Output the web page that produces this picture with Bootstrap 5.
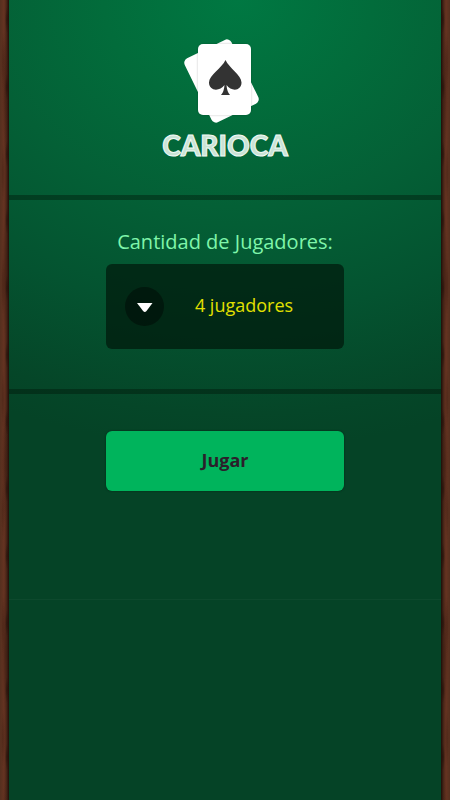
<!DOCTYPE html>
<html lang="es">
<head>
<meta charset="utf-8">
<meta name="viewport" content="width=device-width, initial-scale=1">
<title>Carioca</title>
<link href="https://cdn.jsdelivr.net/npm/bootstrap@5.3.0/dist/css/bootstrap.min.css" rel="stylesheet">
<style>
body { font-family: "Open Sans", sans-serif; background: #054326; }
/* Wooden rails on both sides of the felt */
.rail {
  width: 9px;
  background:
    radial-gradient(ellipse at 7px 20px, rgba(25, 10, 5, .5) 0, transparent 2px) 0 0 / 9px 67px,
    radial-gradient(ellipse 2px 30px at 3px 60px, rgba(35, 15, 8, .25) 0, transparent 100%) 0 0 / 9px 113px,
    radial-gradient(ellipse 3px 60px at 5px 90px, rgba(35, 15, 8, .3) 0, transparent 100%) 0 0 / 9px 187px,
    linear-gradient(90deg, #55301f 0, #653321 45%, #4b2719 70%, #1d0e08 100%);
}
.rail-right { transform: scaleX(-1); }
.felt {
  background:
    linear-gradient(rgba(255, 255, 255, .03), rgba(255, 255, 255, .03)) 0 599px / 100% 1px no-repeat,
    radial-gradient(ellipse 560px 450px at 53% 0, #007842 0, #026c3b 24%, #046036 46%, #045330 70%, #054628 92%, #054326 100%) no-repeat #054326;
}
.band { border-bottom: 5px solid rgba(0, 20, 8, .4); }
.band-logo { padding: 38px 0 29px; }
.band-form { padding: 28px 0 40px; }
.band-action { padding-top: 37px; }
.brand {
  font-family: Lato, sans-serif;
  font-weight: 900;
  font-size: 28px;
  line-height: 42px;
  color: #c9e3d5;
  -webkit-text-stroke: 1px #f2f9f5;
}
.field { width: 55%; }
.field-title { font-size: 20px; line-height: 28px; color: #7ff5aa; }
.players {
  height: 85px;
  padding: 0 0 3px 38px;
  border: 0;
  border-radius: 6px;
  color: #e2e000;
  font-size: 18px;
  text-align: center;
  text-align-last: center;
  background: rgba(0, 18, 8, .65) url("data:image/svg+xml,%3Csvg xmlns='http://www.w3.org/2000/svg' viewBox='0 0 39 39'%3E%3Ccircle cx='19.5' cy='19.5' r='19.5' fill='%23000' fill-opacity='.4'/%3E%3Cpath d='M12 16h15.500l-6 8q-1.700 2-3.400 0z' fill='%23fff'/%3E%3C/svg%3E") no-repeat 19px center / 39px 39px;
}
.players option { color: #222; }
.play {
  height: 60px;
  padding: 0 0 2px;
  border: 0;
  border-radius: 6px;
  background: #00b45c;
  color: #2b1f2b;
  font-size: 18px;
  font-weight: 700;
  box-shadow: 0 0 2px rgba(0, 0, 0, .5);
}
.play:hover { background: #00c766; color: #2b1f2b; }
</style>
</head>
<body>
<div class="d-flex min-vh-100">
  <div class="rail flex-shrink-0"></div>
  <main class="felt flex-grow-1">
    <header class="band band-logo d-flex flex-column align-items-center">
      <svg width="86" height="86" viewBox="182 38 86 86" aria-hidden="true">
        <defs><filter id="cardshade" x="-20%" y="-20%" width="140%" height="140%"><feDropShadow dx="0" dy="0" stdDeviation="1" flood-opacity=".22"/></filter></defs>
        <rect x="195.500" y="45.500" width="52" height="71" rx="5" fill="#fff" transform="rotate(-26 221.500 81)"/>
        <rect x="198" y="44" width="53" height="71" rx="5" fill="#fff" filter="url(#cardshade)"/>
        <path d="M225.500 60C229 68 241.500 75 241.500 82.500C241.500 91 231.500 92 226.500 85Q227 92 230 95H221Q224 92 224.500 85C219.500 92 209 91 209 82.500C209 75 222 68 225.500 60Z" fill="#333"/>
      </svg>
      <div class="brand">CARIOCA</div>
    </header>
    <section class="band band-form d-flex flex-column align-items-center text-center">
      <label class="field-title mb-2" for="players">Cantidad de Jugadores:</label>
      <div class="field">
        <select id="players" class="form-select players">
          <option>2 jugadores</option>
          <option>3 jugadores</option>
          <option selected>4 jugadores</option>
        </select>
      </div>
    </section>
    <section class="band-action d-flex justify-content-center">
      <div class="field"><button type="button" class="btn play w-100">Jugar</button></div>
    </section>
  </main>
  <div class="rail rail-right flex-shrink-0"></div>
</div>
<script src="https://cdn.jsdelivr.net/npm/bootstrap@5.3.0/dist/js/bootstrap.bundle.min.js"></script>
</body>
</html>
